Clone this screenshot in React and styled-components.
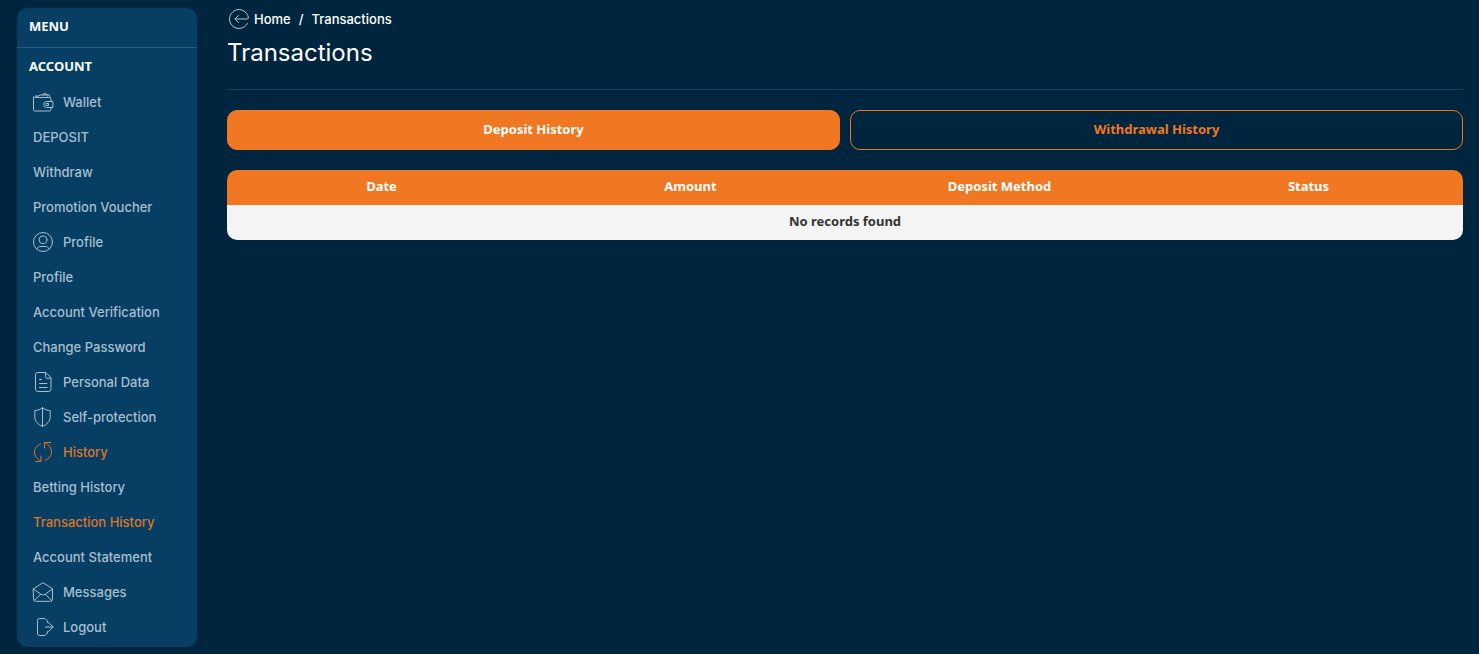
import React, { useState } from "react";
import styled, { createGlobalStyle } from "styled-components";

const icons = {
	wallet: (
		<>
			<path d="M.500 5v12.500A1.500 1.500 0 0 0 2 19h14.500a1.500 1.500 0 0 0 1.500-1.500V16M18 9V7a1.500 1.500 0 0 0-1.500-1.500H2A1.200 1.200 0 0 1 2 4h2" />
			<path d="M4 4.500 12.500 1.200l1.800 3M10 3.500l4-1 2.300.500.700 2" />
			<path d="M19.500 9.500h-5.800a3 3 0 0 0 0 6h5.800zM13.500 11.500h2v2h-2z" />
		</>
	),
	profile: (
		<>
			<circle cx="10" cy="10" r="9.500" />
			<circle cx="10" cy="7.800" r="3.900" />
			<path d="M3.600 16.800c1.200-1.800 2.600-2.300 4.400-2.300h4c1.800 0 3.200.5 4.400 2.300" />
		</>
	),
	document: (
		<>
			<path d="M12.500.500H4.800a2.300 2.300 0 0 0-2.300 2.300v14.400a2.300 2.300 0 0 0 2.300 2.300h10.900a2.300 2.300 0 0 0 2.300-2.300V6.200zM12.500.500v4.200c0 .9.500 1.500 1.500 1.500h4" />
			<path d="M6.500 7.500h2M6.500 11.500h7.500M6.500 15.500h7.500" />
		</>
	),
	shield: (
		<path d="M9.500.800C7.200 2.600 4.500 3.400 1.800 3.600v6.600c0 4 3.200 7.200 7.700 9.200 4.500-2 7.700-5.200 7.700-9.200V3.600C14.500 3.400 11.800 2.600 9.500.800zM9.500.800v18.600" />
	),
	history: (
		<>
			<path d="M7.500 2C3.900 3.500 1.500 6.400 1.500 10c0 4 2.400 7.200 6 9M3 19.500h5V14" />
			<path d="M12.500 18.300c3.600-1.600 6-4.700 6-8.300 0-4-2.400-7.200-6-9M18 .500h-6.500V6" />
		</>
	),
	messages: (
		<>
			<path d="M.500 6.800 10 .700l9.500 6.100v10.400a2.100 2.100 0 0 1-2.100 2.100H2.600A2.100 2.100 0 0 1 .500 17.200z" />
			<path d="m.500 7 7.300 5.200c1.500 1 2.900 1 4.400 0L19.500 7M1.200 18.500l6.600-6.300M18.800 18.500l-6.600-6.300" />
		</>
	),
	logout: (
		<>
			<path d="M14.500 5.500V4L12 1.500H6.500a2 2 0 0 0-2 2v13a2 2 0 0 0 2 2H12l2.500-2.500v-1.500" />
			<path d="M12.500 10H20M15.500 5.500 20.200 10l-4.700 4.500" />
		</>
	),
	back: (
		<>
			<path d="M19.400 8.500A9.500 9.500 0 1 0 18.400 14.500" />
			<path d="M19.400 8.500c0 1.300-.9 1.500-2.400 1.500H6M9.500 6.500 6 10l3.500 3.500" />
		</>
	),
};

const menuItems = [
	{ label: "Wallet", icon: "wallet" },
	{ label: "DEPOSIT" },
	{ label: "Withdraw" },
	{ label: "Promotion Voucher" },
	{ label: "Profile", icon: "profile" },
	{ label: "Profile" },
	{ label: "Account Verification" },
	{ label: "Change Password" },
	{ label: "Personal Data", icon: "document" },
	{ label: "Self-protection", icon: "shield" },
	{ label: "History", icon: "history", active: true },
	{ label: "Betting History" },
	{ label: "Transaction History", active: true },
	{ label: "Account Statement" },
	{ label: "Messages", icon: "messages" },
	{ label: "Logout", icon: "logout" },
];

const tabs = [
	{ label: "Deposit History", method: "Deposit Method" },
	{ label: "Withdrawal History", method: "Withdrawal Method" },
];

const Icon = ({ name }) => (
	<IconSvg viewBox="0 0 20 20" aria-hidden="true">
		{icons[name]}
	</IconSvg>
);

const App = () => {
	const [tab, setTab] = useState(0);
	const columns = ["Date", "Amount", tabs[tab].method, "Status"];

	return (
		<>
			<GlobalStyle />
			<Page>
				<Sidebar>
					<MenuTitle>MENU</MenuTitle>
					<SectionTitle>ACCOUNT</SectionTitle>
					<nav>
						<MenuList>
							{menuItems.map((item, index) => (
								<li key={index}>
									<MenuLink href="#" $active={item.active}>
										{item.icon && <Icon name={item.icon} />}
										<span>{item.label}</span>
									</MenuLink>
								</li>
							))}
						</MenuList>
					</nav>
				</Sidebar>
				<Main>
					<Breadcrumb>
						<BackLink href="#">
							<Icon name="back" />
							Home
						</BackLink>
						<span>/</span>
						<span>Transactions</span>
					</Breadcrumb>
					<Title>Transactions</Title>
					<Tabs>
						{tabs.map((item, index) => (
							<TabButton
								key={item.label}
								type="button"
								$active={index === tab}
								onClick={() => setTab(index)}
							>
								{item.label}
							</TabButton>
						))}
					</Tabs>
					<Table>
						<thead>
							<tr>
								{columns.map((column) => (
									<th key={column}>{column}</th>
								))}
							</tr>
						</thead>
						<tbody>
							<tr>
								<td colSpan={4}>No records found</td>
							</tr>
						</tbody>
					</Table>
				</Main>
			</Page>
		</>
	);
};

const GlobalStyle = createGlobalStyle`
	* {
		box-sizing: border-box;
	}
	body {
		margin: 0;
		background: #00253e;
		color: #fff;
		font-family: Inter, "Open Sans", sans-serif;
		font-size: 13px;
	}
	a {
		color: inherit;
		text-decoration: none;
	}
`;

const Page = styled.div`
	display: flex;
	align-items: flex-start;
	gap: 30px;
	padding: 8px 16px 7px 17px;
`;

const Sidebar = styled.aside`
	flex: 0 0 180px;
	padding-bottom: 3px;
	border-radius: 10px;
	background: #063e64;
`;

const MenuTitle = styled.h2`
	margin: 0;
	padding: 0 12px 3px;
	border-bottom: 1px solid #275a80;
	font-family: "Noto Sans", sans-serif;
	font-size: 13px;
	font-weight: 700;
	line-height: 36px;
`;

const SectionTitle = styled(MenuTitle).attrs({ as: "h3" })`
	padding-bottom: 0;
	border-bottom: 0;
`;

const MenuList = styled.ul`
	margin: 0;
	padding: 0;
	list-style: none;
`;

const MenuLink = styled.a`
	display: flex;
	align-items: center;
	gap: 10px;
	height: 35px;
	padding: 0 16px;
	color: ${({ $active }) => ($active ? "#de7526" : "#a9bfcd")};
	font-weight: 500;
	white-space: nowrap;
`;

const IconSvg = styled.svg`
	flex: none;
	width: 20px;
	height: 20px;
	overflow: visible;
	fill: none;
	stroke: currentColor;
	stroke-linecap: round;
	stroke-linejoin: round;
`;

const Main = styled.main`
	flex: 1;
	min-width: 0;
`;

const Breadcrumb = styled.nav`
	display: flex;
	gap: 8px;
	font-weight: 500;
	line-height: 22px;
`;

const BackLink = styled.a`
	display: flex;
	align-items: center;
	gap: 5px;
	padding-left: 2px;

	svg {
		color: #b9c5cd;
	}
`;

const Title = styled.h1`
	margin: 0 0 20px;
	padding: 8px 0 21px;
	border-bottom: 1px solid #173f5c;
	font-size: 24px;
	font-weight: 400;
	line-height: 30px;
`;

const Tabs = styled.div`
	display: flex;
	gap: 10px;
	margin-bottom: 20px;
`;

const TabButton = styled.button`
	flex: 1;
	height: 40px;
	padding: 0 8px 2px;
	border: 1px solid #f07823;
	border-radius: 10px;
	background: ${({ $active }) => ($active ? "#f07823" : "transparent")};
	color: ${({ $active }) => ($active ? "#fff" : "#f07823")};
	font-family: "Noto Sans", sans-serif;
	font-size: 13px;
	font-weight: 700;
	cursor: pointer;
`;

const Table = styled.table`
	width: 100%;
	overflow: hidden;
	border-collapse: collapse;
	border-radius: 10px;
	table-layout: fixed;
	font-family: "Noto Sans", sans-serif;
	text-align: center;

	th,
	td {
		height: 35px;
		padding: 0 8px 3px;
		font-weight: 700;
	}
	th {
		background: #f07823;
	}
	td {
		background: #f4f4f4;
		color: #333;
	}
`;

export default App;
